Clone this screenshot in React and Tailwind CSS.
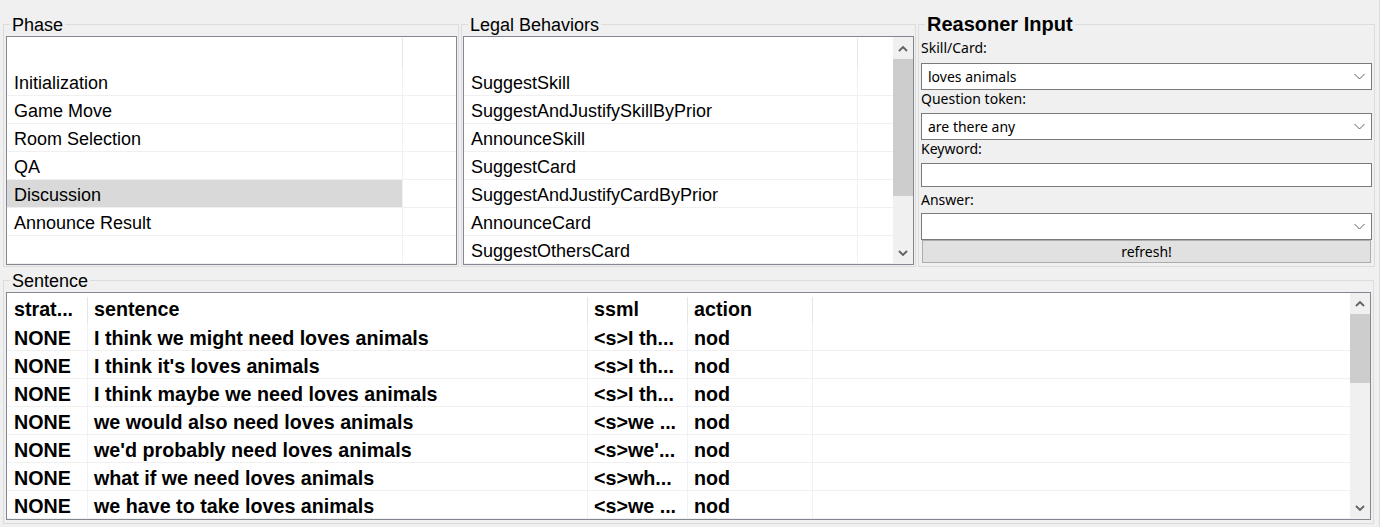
const phases = ['Initialization', 'Game Move', 'Room Selection', 'QA', 'Discussion', 'Announce Result', '']
const behaviors = [
    'SuggestSkill',
    'SuggestAndJustifySkillByPrior',
    'AnnounceSkill',
    'SuggestCard',
    'SuggestAndJustifyCardByPrior',
    'AnnounceCard',
    'SuggestOthersCard',
]
const sentences = [
    ['I think we might need loves animals', '<s>I th...'],
    ["I think it's loves animals", '<s>I th...'],
    ['I think maybe we need loves animals', '<s>I th...'],
    ['we would also need loves animals', '<s>we ...'],
    ["we'd probably need loves animals", "<s>we'..."],
    ['what if we need loves animals', '<s>wh...'],
    ['we have to take loves animals', '<s>we ...'],
]

function Arrow({ up }) {
    return (
        <svg width="10" height="7" viewBox="0 0 10 7" className="block">
            <path
                d={up ? 'M1 6 L5 2 L9 6' : 'M1 1 L5 5 L9 1'}
                fill="none"
                stroke="#606060"
                strokeWidth="1.8"
            />
        </svg>
    )
}

function Scrollbar({ top, thumb, bottom }) {
    return (
        <div className="flex w-[20px] shrink-0 flex-col bg-[#f0f0f0]">
            <div className={`flex shrink-0 items-center justify-center ${top}`}>
                <Arrow up />
            </div>
            <div className={`shrink-0 bg-[#cdcdcd] ${thumb}`} />
            <div className="flex-1" />
            <div className={`flex shrink-0 items-center justify-center ${bottom}`}>
                <Arrow />
            </div>
        </div>
    )
}

function Chevron() {
    return (
        <svg width="11" height="7" viewBox="0 0 11 7" className="ml-auto block">
            <path d="M0.5 1 L5.5 6 L10.5 1" fill="none" stroke="#606060" strokeWidth="1" />
        </svg>
    )
}

function ListBox({ items, selected, colWidth, scroll }) {
    return (
        <div className="flex h-[229px] w-[451px] border border-[#828790] bg-white">
            <div className="flex flex-1 flex-col">
                <div className="flex h-[31px] shrink-0">
                    <div className={`${colWidth} mt-[1px] border-r border-[#e5e5e5]`} />
                </div>
                {items.map((item, i) => (
                    <div key={i} className="flex h-[28px] shrink-0 border-b border-[#f0f0f0]">
                        <div
                            className={`${colWidth} flex items-center border-r border-[#eef2f8] pl-[7px] pt-[4px] text-[18px] ${
                                selected === i ? 'bg-[#d9d9d9]' : ''
                            }`}
                        >
                            {item}
                        </div>
                    </div>
                ))}
            </div>
            {scroll ? <Scrollbar top="h-[22px]" thumb="h-[137px]" bottom="h-[22px]" /> : null}
        </div>
    )
}

function Combo({ value }) {
    return (
        <div className="flex h-[27px] items-center border border-[#7a7a7a] bg-white pl-[6px] pr-[6px] text-[14px]">
            <span>{value}</span>
            <Chevron />
        </div>
    )
}

export default function App() {
    const label = "font-['Noto_Sans',sans-serif] text-[14px]"
    return (
        <div className="h-[527px] w-[1380px] overflow-hidden border-r border-[#dcdcdc] bg-[#f0f0f0] pl-[3px] pt-[14px] font-['Liberation_Sans',Arial,sans-serif] text-black">
            <div className="flex">
                <fieldset className="h-[253px] w-[456px] border border-[#dcdcdc] pl-[2px]">
                    <legend className="ml-[4px] px-[2px] pt-[1px] text-[18px] leading-[20px]">Phase</legend>
                    <div className="mt-[1px]">
                        <ListBox items={phases} selected={4} colWidth="w-[396px]" />
                    </div>
                </fieldset>
                <fieldset className="ml-[2px] h-[253px] w-[455px] border border-[#dcdcdc] pl-[1px]">
                    <legend className="ml-[5px] px-[2px] pt-[1px] text-[18px] leading-[20px]">Legal Behaviors</legend>
                    <div className="mt-[1px]">
                        <ListBox items={behaviors} colWidth="w-[394px]" scroll />
                    </div>
                </fieldset>
                <fieldset className="ml-[2px] h-[253px] w-[457px] border border-[#dcdcdc] pl-[2px] pr-[2px]">
                    <legend className="ml-[4px] px-[2px] text-[20px] font-bold leading-[20px]">Reasoner Input</legend>
                    <div className={label}>
                        <div className="h-[29px] pt-[4px] leading-[20px]">Skill/Card:</div>
                        <Combo value="loves animals" />
                        <div className="h-[23px] leading-[18px]">Question token:</div>
                        <Combo value="are there any" />
                        <div className="h-[23px] leading-[18px]">Keyword:</div>
                        <div className="h-[24px] border border-[#7a7a7a] bg-white" />
                        <div className="h-[26px] pt-[3px] leading-[20px]">Answer:</div>
                        <Combo value="" />
                        <div className="mx-[1px] flex h-[23px] items-center justify-center border border-[#adadad] bg-[#e1e1e1]">
                            refresh!
                        </div>
                    </div>
                </fieldset>
            </div>

            <fieldset className="mt-[3px] h-[254px] w-[1371px] border border-[#dcdcdc] pl-[2px]">
                <legend className="ml-[4px] px-[2px] pt-[1px] text-[18px] leading-[20px]">Sentence</legend>
                <div className="mt-[1px] flex h-[228px] w-[1365px] border border-[#828790] bg-white text-[19.7px] font-bold">
                    <div className="flex flex-1 flex-col">
                        <div className="flex h-[30px] shrink-0 items-stretch pt-[4px]">
                            <div className="flex w-[81px] items-center border-r border-[#e5e5e5] pl-[7px]">strat...</div>
                            <div className="flex w-[500px] items-center border-r border-[#e5e5e5] pl-[6px]">sentence</div>
                            <div className="flex w-[100px] items-center border-r border-[#e5e5e5] pl-[6px]">ssml</div>
                            <div className="flex w-[125px] items-center border-r border-[#e5e5e5] pl-[6px]">action</div>
                        </div>
                        {sentences.map(([text, ssml], i) => (
                            <div key={i} className="flex h-[28px] shrink-0 border-b border-[#f0f0f0]">
                                <div className="flex w-[81px] items-center border-r border-[#eef2f8] pl-[7px] pt-[5px]">NONE</div>
                                <div className="flex w-[500px] items-center border-r border-[#eef2f8] pl-[6px] pt-[5px]">{text}</div>
                                <div className="flex w-[100px] items-center border-r border-[#eef2f8] pl-[6px] pt-[5px]">{ssml}</div>
                                <div className="flex w-[125px] items-center border-r border-[#eef2f8] pl-[6px] pt-[5px]">nod</div>
                            </div>
                        ))}
                    </div>
                    <Scrollbar top="h-[21px]" thumb="h-[69px]" bottom="h-[21px]" />
                </div>
            </fieldset>
        </div>
    )
}
